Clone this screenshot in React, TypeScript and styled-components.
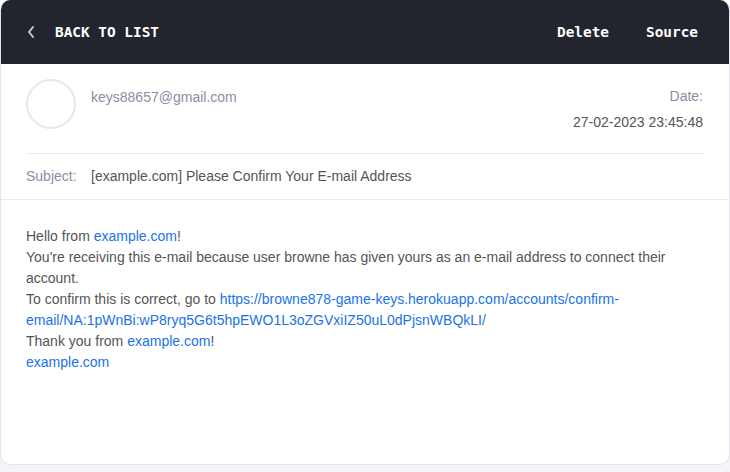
import React from "react";
import styled, { createGlobalStyle } from "styled-components";

const GlobalStyle = createGlobalStyle`
  html, body {
    margin: 0;
    padding: 0;
  }
  body {
    background: linear-gradient(#ffffff 0 50%, #f4f5f8 50% 100%);
    font-family: "Liberation Sans", Arial, sans-serif;
    min-height: 472px;
  }
`;

const Card = styled.div`
  width: 730px;
  height: 465px;
  box-sizing: border-box;
  background: #fff;
  border: 1px solid #e4e3f0;
  border-top: none;
  border-radius: 10px;
  overflow: hidden;
  display: flex;
  flex-direction: column;
`;

const Toolbar = styled.header`
  height: 64px;
  flex-shrink: 0;
  background: #22252d;
  display: flex;
  align-items: center;
  justify-content: space-between;
  padding: 0 31px 0 25px;
  font-family: "DejaVu Sans Mono", "Liberation Mono", monospace;
  font-weight: bold;
  font-size: 14.4px;
  color: #fff;
`;

const BackLink = styled.a`
  display: flex;
  align-items: center;
  gap: 19px;
  color: #fff;
  text-decoration: none;
  cursor: pointer;
`;

const Actions = styled.nav`
  display: flex;
  gap: 37px;
`;

const ActionLink = styled.a`
  color: #fff;
  text-decoration: none;
  cursor: pointer;
`;

const Meta = styled.section`
  padding: 0 25px;
`;

const FromRow = styled.div`
  display: flex;
  justify-content: space-between;
  align-items: flex-start;
  padding: 15px 0 20px;
  border-bottom: 1px solid #ebebef;
`;

const Sender = styled.div`
  display: flex;
  align-items: flex-start;
  gap: 15px;
`;

const Avatar = styled.div`
  width: 50px;
  height: 50px;
  box-sizing: border-box;
  border: 2px solid #e7e6f1;
  border-radius: 50%;
`;

const Muted = styled.span`
  color: #8a8ea3;
  font-size: 14px;
  line-height: 21px;
`;

const SenderEmail = styled(Muted)`
  margin-top: 8px;
`;

const DateBlock = styled.div`
  display: flex;
  flex-direction: column;
  align-items: flex-end;
  gap: 5px;
  margin-top: 7px;
  margin-right: 1px;
`;

const Value = styled.span`
  color: #555;
  font-size: 14px;
  line-height: 21px;
`;

const SubjectRow = styled.div`
  height: 45px;
  display: flex;
  align-items: center;
  padding: 0 25px;
  border-bottom: 1px solid #ebebef;
`;

const SubjectLabel = styled(Muted)`
  width: 65px;
`;

const Body = styled.div`
  padding: 26px 25px;
  color: #555;
  font-size: 14px;
  line-height: 21px;
`;

const Link = styled.a`
  color: #1a73e8;
  text-decoration: none;
`;

function Chevron() {
  return (
    <svg width="10" height="14" viewBox="0 0 10 14">
      <polyline
        points="7,2 3,7 7,12"
        fill="none"
        stroke="#c9cad0"
        strokeWidth="2"
        strokeLinecap="round"
        strokeLinejoin="round"
      />
    </svg>
  );
}

export default function App() {
  return (
    <>
      <GlobalStyle />
      <Card>
        <Toolbar>
          <BackLink>
            <Chevron />
            BACK TO LIST
          </BackLink>
          <Actions>
            <ActionLink>Delete</ActionLink>
            <ActionLink>Source</ActionLink>
          </Actions>
        </Toolbar>
        <Meta>
          <FromRow>
            <Sender>
              <Avatar />
              <SenderEmail>keys88657@gmail.com</SenderEmail>
            </Sender>
            <DateBlock>
              <Muted>Date:</Muted>
              <Value>27-02-2023 23:45:48</Value>
            </DateBlock>
          </FromRow>
        </Meta>
        <SubjectRow>
          <SubjectLabel>Subject:</SubjectLabel>
          <Value>[example.com] Please Confirm Your E-mail Address</Value>
        </SubjectRow>
        <Body>
          Hello from <Link>example.com</Link>!
          <br />
          You're receiving this e-mail because user browne has given yours as
          an e-mail address to connect their account.
          <br />
          To confirm this is correct, go to{" "}
          <Link>
            https://browne878-game-keys.herokuapp.com/accounts/confirm-
            <wbr />
            email/NA:1pWnBi:wP8ryq5G6t5hpEWO1L3oZGVxiIZ50uL0dPjsnWBQkLI/
          </Link>
          <br />
          Thank you from <Link>example.com</Link>!
          <br />
          <Link>example.com</Link>
        </Body>
      </Card>
    </>
  );
}
